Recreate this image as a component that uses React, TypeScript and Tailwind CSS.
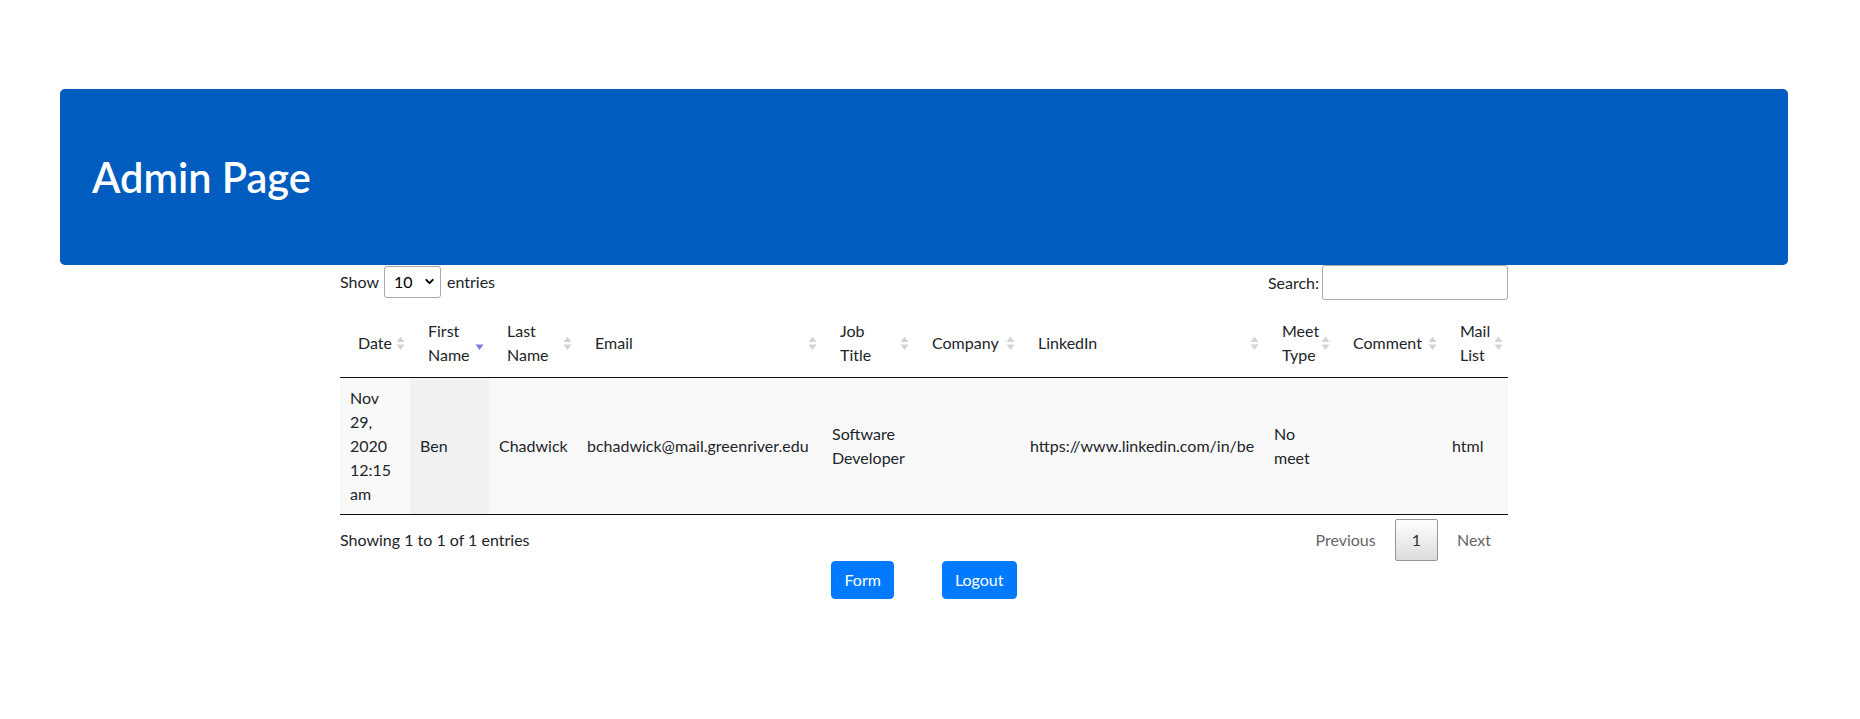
import { ChevronDown } from 'lucide-react';

type Col = { label: React.ReactNode; width: number; sort: 'both' | 'desc' };

const columns: Col[] = [
  { label: 'Date', width: 70, sort: 'both' },
  { label: <>First<br />Name</>, width: 79, sort: 'desc' },
  { label: <>Last<br />Name</>, width: 88, sort: 'both' },
  { label: 'Email', width: 245, sort: 'both' },
  { label: <>Job<br />Title</>, width: 92, sort: 'both' },
  { label: 'Company', width: 106, sort: 'both' },
  { label: 'LinkedIn', width: 244, sort: 'both' },
  { label: <>Meet<br />Type</>, width: 71, sort: 'both' },
  { label: 'Comment', width: 107, sort: 'both' },
  { label: <>Mail<br />List</>, width: 66, sort: 'both' },
];

function SortIcon({ kind }: { kind: 'both' | 'desc' }) {
  return (
    <svg width="19" height="19" viewBox="0 0 19 19">
      {kind === 'both' && <polygon points="5.5,8.5 9.5,3 13.5,8.5" fill="#d4d4d4" />}
      <polygon points="5.5,11 13.5,11 9.5,16.5" fill={kind === 'desc' ? '#7a80dc' : '#d4d4d4'} />
    </svg>
  );
}

export default function App() {
  const row = [
    <>Nov<br />29,<br />2020<br />12:15<br />am</>,
    'Ben',
    'Chadwick',
    'bchadwick@mail.greenriver.edu',
    <>Software<br />Developer</>,
    '',
    'https://www.linkedin.com/in/be',
    <>No<br />meet</>,
    '',
    'html',
  ];

  return (
    <div className="w-[1848px] min-h-[719px] bg-white font-['Lato',sans-serif] text-[16px] leading-6 text-[#212529]">
      {/* Header */}
      <div className="px-[60px] pt-[89px]">
        <div className="bg-[#005cbf] rounded-[5px] px-8 pt-16 pb-16">
          <h1 className="text-[41.5px] leading-[48px] font-semibold text-white">Admin Page</h1>
        </div>
      </div>

      <div className="w-[1168px] mx-auto">
        {/* Controls */}
        <div className="flex justify-between items-start">
          <div className="flex items-center h-[33px]">
            <span>Show</span>
            <div className="ml-[5px] flex items-center justify-between w-[57px] h-[32px] border border-[#aaa] rounded-[3px] pl-[9px] pr-[4px] text-black">
              <span>10</span>
              <ChevronDown size={13} strokeWidth={3.5} />
            </div>
            <span className="ml-[6px]">entries</span>
          </div>
          <div className="flex items-center h-[35px]">
            <span>Search:</span>
            <div className="ml-[3px] w-[186px] h-[35px] border border-[#aaa] rounded-[3px]" />
          </div>
        </div>

        {/* Table */}
        <table className="mt-[9px] w-[1168px] table-fixed border-collapse">
          <colgroup>
            {columns.map((c, i) => (
              <col key={i} style={{ width: c.width }} />
            ))}
          </colgroup>
          <thead>
            <tr className="border-b border-[#111]">
              {columns.map((c, i) => (
                <th key={i} className="relative text-left font-normal align-middle py-[10px] pl-[18px] pr-[18px] whitespace-nowrap">
                  {c.label}
                  <span className="absolute right-0 top-1/2 -translate-y-1/2 flex">
                    <SortIcon kind={c.sort} />
                  </span>
                </th>
              ))}
            </tr>
          </thead>
          <tbody>
            <tr className="bg-[#f9f9f9] border-b border-[#111]">
              {row.map((cell, i) => (
                <td
                  key={i}
                  className={`py-2 px-[10px] align-middle whitespace-nowrap overflow-hidden ${i === 1 ? 'bg-[#f1f1f1]' : ''}`}
                >
                  {cell}
                </td>
              ))}
            </tr>
          </tbody>
        </table>

        {/* Footer */}
        <div className="flex justify-between items-start">
          <div className="pt-[13px]">Showing 1 to 1 of 1 entries</div>
          <div className="flex pt-[4px] text-[#666]">
            <span className="px-4 py-2 border border-transparent">Previous</span>
            <span className="ml-[2px] px-4 py-2 border border-[#979797] rounded-[2px] bg-gradient-to-b from-white to-[#dcdcdc] text-[#333]">1</span>
            <span className="ml-[2px] px-4 py-2 border border-transparent">Next</span>
          </div>
        </div>

        {/* Actions */}
        <div className="flex justify-center gap-12">
          <button className="bg-[#007bff] text-white rounded-[4px] border border-[#007bff] px-3 py-[6px] leading-6">Form</button>
          <button className="bg-[#007bff] text-white rounded-[4px] border border-[#007bff] px-3 py-[6px] leading-6">Logout</button>
        </div>
      </div>
    </div>
  );
}
